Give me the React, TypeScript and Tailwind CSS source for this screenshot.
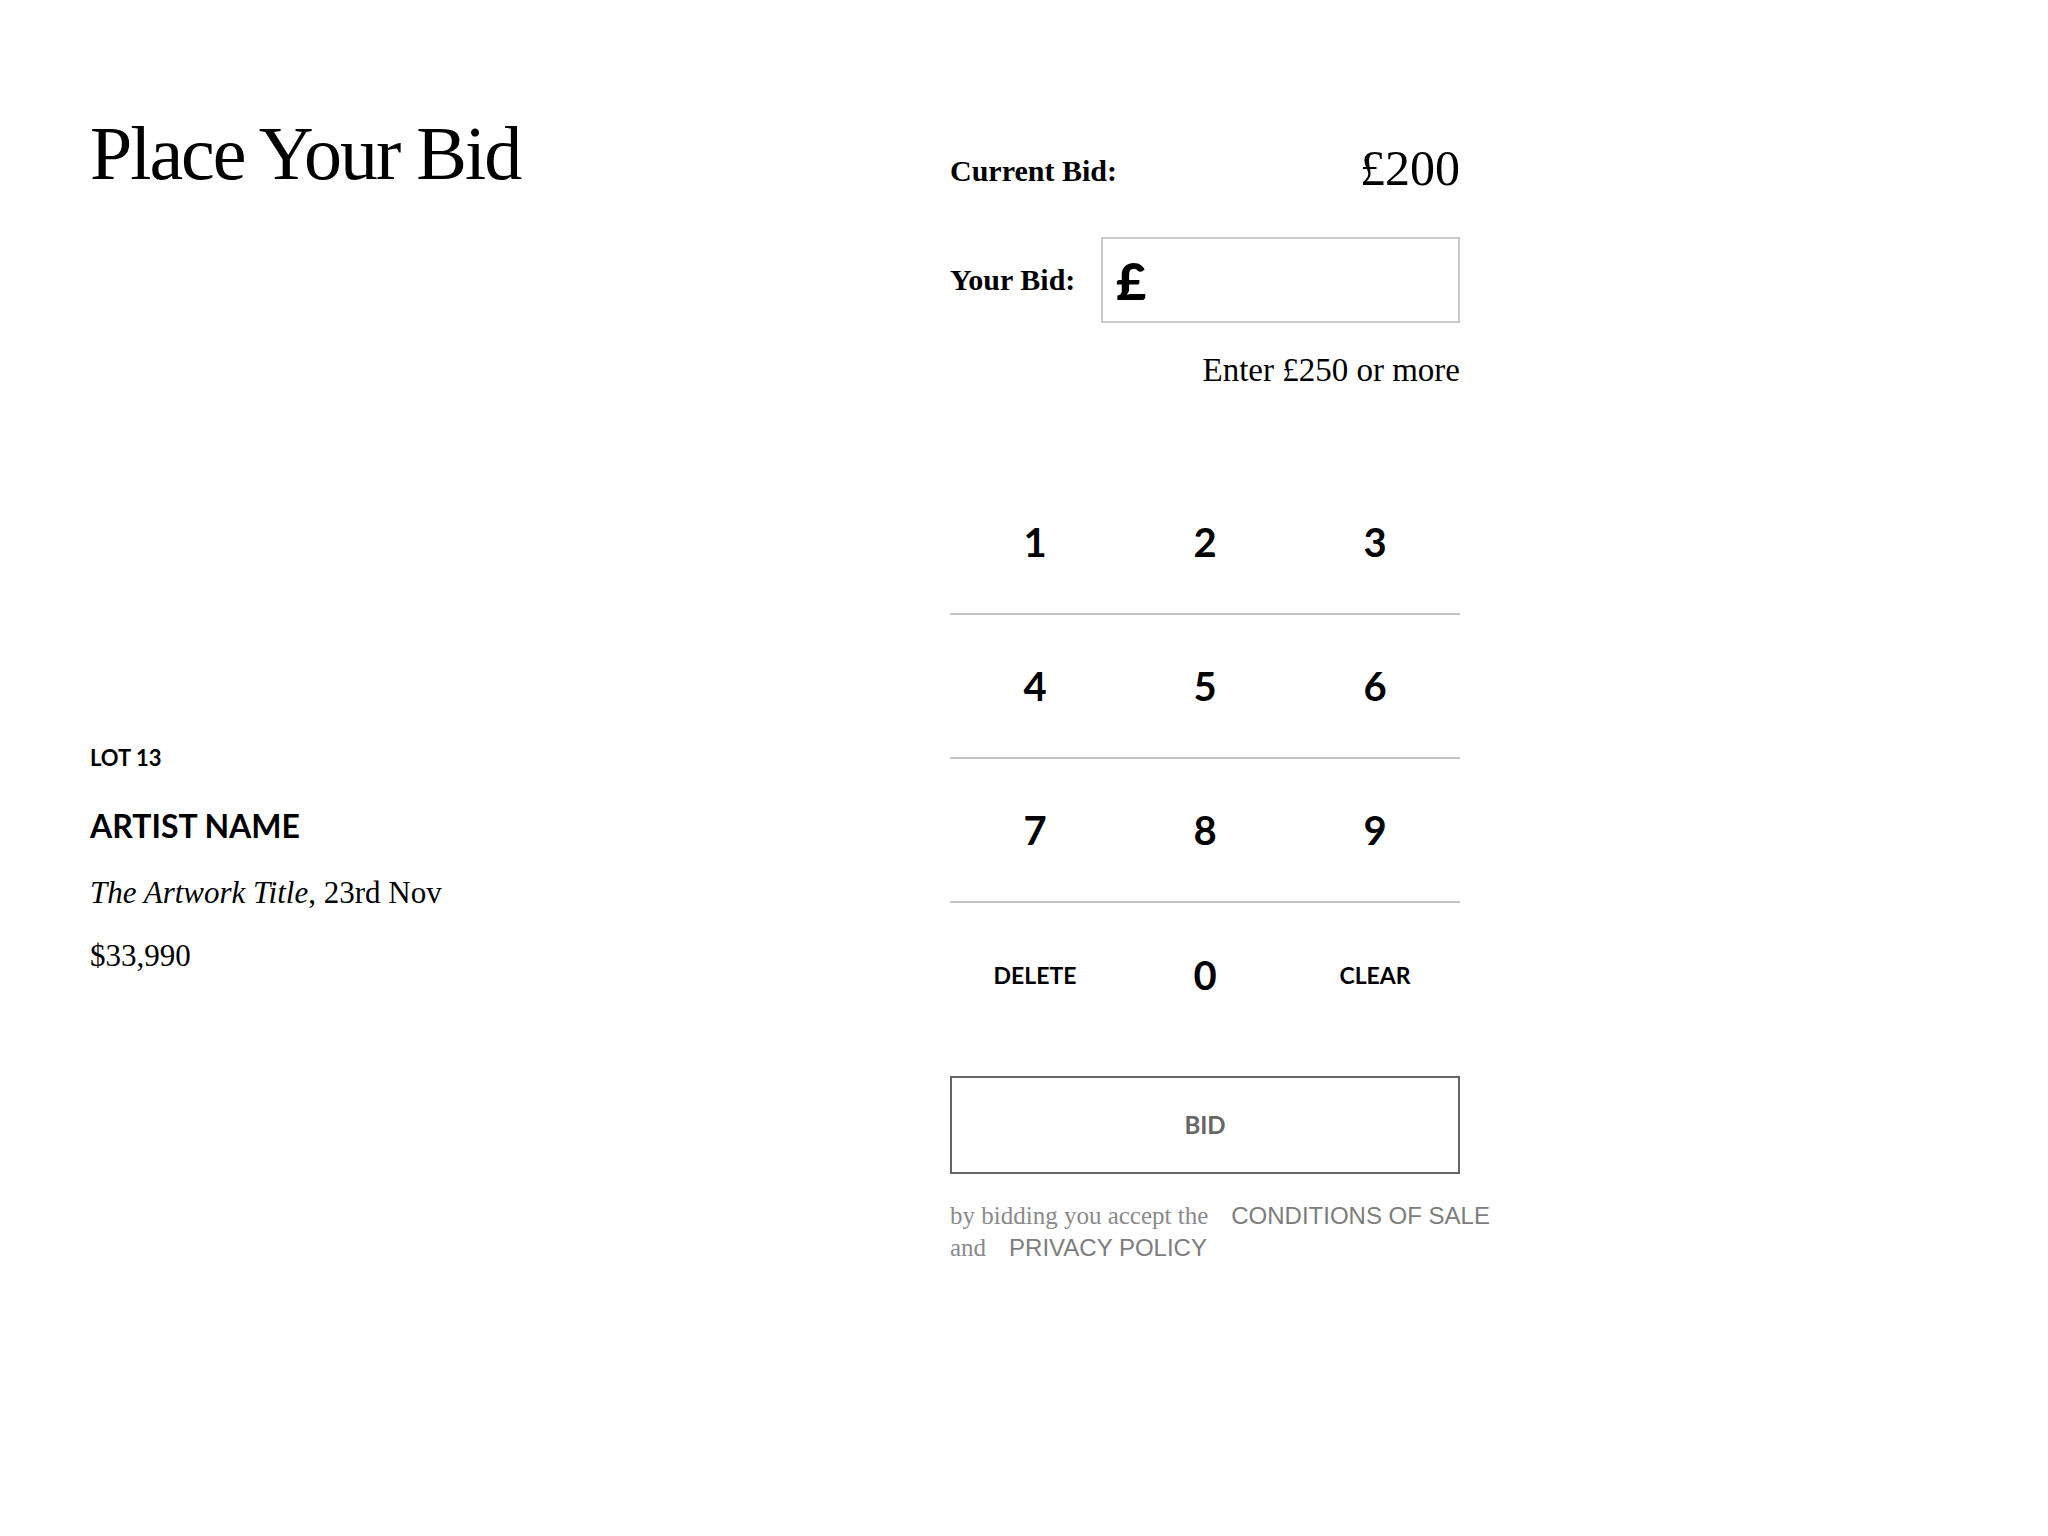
import React, { useState } from "react";

const serif = "font-['Liberation_Serif',serif]";
const sans = "font-['Lato',sans-serif]";

export default function App() {
  const [bid, setBid] = useState("");

  const press = (key: string) => {
    if (key === "DELETE") setBid((b) => b.slice(0, -1));
    else if (key === "CLEAR") setBid("");
    else setBid((b) => (b + key).slice(0, 9));
  };

  const rows = [
    ["1", "2", "3"],
    ["4", "5", "6"],
    ["7", "8", "9"],
    ["DELETE", "0", "CLEAR"],
  ];

  return (
    <div className="min-h-screen bg-white text-black flex">
      {/* left column */}
      <div className="w-[950px] pl-[90px] pt-[115px]">
        <h1 className={`${serif} text-[76px] leading-none tracking-[-2px]`}>
          Place Your Bid
        </h1>

        <div className={`${sans} mt-[556px] text-[22px] leading-none font-bold`}>
          LOT 13
        </div>
        <div className={`${sans} mt-[41px] text-[32px] leading-none font-bold`}>
          ARTIST NAME
        </div>
        <div className={`${serif} mt-[35px] text-[31px] leading-none`}>
          <span className="italic">The Artwork Title</span>, 23rd Nov
        </div>
        <div className={`${serif} mt-[32px] text-[31px] leading-none`}>
          $33,990
        </div>
      </div>

      {/* right column */}
      <div className="w-[510px] pt-[143px]">
        <div className="flex items-center justify-between">
          <span className={`${serif} pt-[6px] text-[30px] leading-none font-bold`}>
            Current Bid:
          </span>
          <span className={`${serif} text-[50px] leading-none`}>£200</span>
        </div>

        <div className="mt-[44px] flex items-center">
          <span className={`${serif} w-[151px] shrink-0 text-[30px] leading-none font-bold`}>
            Your Bid:
          </span>
          <div className="flex h-[86px] flex-1 items-center border-2 border-[#cacaca] pl-[13px]">
            <span className={`${sans} text-[52px] leading-none font-black`}>£</span>
            <span className={`${sans} ml-2 text-[36px] leading-none font-bold`}>{bid}</span>
          </div>
        </div>

        <div className={`${serif} mt-[31px] text-right text-[33px] leading-none`}>
          Enter £250 or more
        </div>

        <div className="mt-[84px]">
          {rows.map((row, i) => (
            <div
              key={i}
              className={`grid h-[144px] grid-cols-3 ${i < 3 ? "border-b-2 border-[#c4c4c4]" : ""}`}
            >
              {row.map((k) => (
                <button
                  key={k}
                  onClick={() => press(k)}
                  className={`${sans} flex items-center justify-center font-bold leading-none ${
                    k.length > 1 ? "text-[23px]" : "text-[40px]"
                  }`}
                >
                  {k}
                </button>
              ))}
            </div>
          ))}
        </div>

        <button
          className={`${sans} mt-[29px] flex h-[98px] w-full items-center justify-center border-2 border-[#666666] text-[24px] font-bold text-[#666666]`}
        >
          BID
        </button>

        <div className="mt-[25px] whitespace-nowrap text-[24px] leading-[31px] text-[#8a8a8a]">
          <div>
            <span className={`${serif} text-[25px]`}>by bidding you accept the</span>
            <a className="ml-[23px] font-['Liberation_Sans',Arial,sans-serif] text-[#7d7d7d]">
              CONDITIONS OF SALE
            </a>
          </div>
          <div>
            <span className={`${serif} text-[25px]`}>and</span>
            <a className="ml-[23px] font-['Liberation_Sans',Arial,sans-serif] text-[#7d7d7d]">
              PRIVACY POLICY
            </a>
          </div>
        </div>
      </div>
    </div>
  );
}
